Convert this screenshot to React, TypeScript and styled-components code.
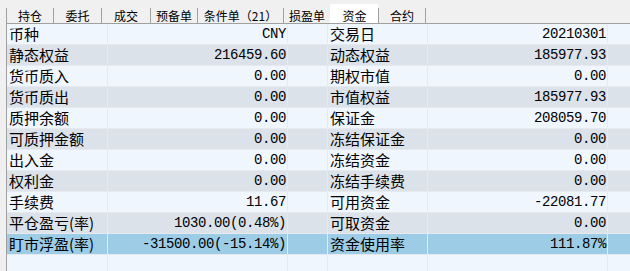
import styled, { createGlobalStyle } from "styled-components";
import { FC } from "react";

const GlobalStyle = createGlobalStyle`
    html, body {
        margin: 0;
        padding: 0;
        background: #f0f0f0;
    }
    body {
        width: 630px;
        height: 271px;
        overflow: hidden;
        font-family: "Noto Sans CJK SC", "Liberation Sans", sans-serif;
    }
`;

const tabs = [
    { name: "持仓", width: 47 },
    { name: "委托", width: 48 },
    { name: "成交", width: 49 },
    { name: "预备单", width: 47 },
    { name: "条件单（21）", width: 86 },
    { name: "损盈单", width: 47 },
    { name: "资金", width: 48 },
    { name: "合约", width: 48 },
];

const rows: [string, string, string, string][] = [
    ["币种", "CNY", "交易日", "20210301"],
    ["静态权益", "216459.60", "动态权益", "185977.93"],
    ["货币质入", "0.00", "期权市值", "0.00"],
    ["货币质出", "0.00", "市值权益", "185977.93"],
    ["质押余额", "0.00", "保证金", "208059.70"],
    ["可质押金额", "0.00", "冻结保证金", "0.00"],
    ["出入金", "0.00", "冻结资金", "0.00"],
    ["权利金", "0.00", "冻结手续费", "0.00"],
    ["手续费", "11.67", "可用资金", "-22081.77"],
    ["平仓盈亏(率)", "1030.00(0.48%)", "可取资金", "0.00"],
    ["盯市浮盈(率)", "-31500.00(-15.14%)", "资金使用率", "111.87%"],
];

type Tone = "light" | "dark" | "active";

const App: FC = () => {
    const activeTab = "资金";
    return (
        <>
            <GlobalStyle />
            <Wrapper>
                <TabBar>
                    {tabs.map((t, i) => (
                        <Tab
                            key={t.name}
                            $width={t.width}
                            $active={t.name === activeTab}
                            $last={i === tabs.length - 1}>
                            {t.name}
                        </Tab>
                    ))}
                </TabBar>
                <Table>
                    <Grid>
                        {rows.map((r, i) => {
                            const tone: Tone = i === rows.length - 1 ? "active" : i % 2 === 0 ? "light" : "dark";
                            return (
                                <Row key={r[0]}>
                                    <Label $tone={tone}>{r[0]}</Label>
                                    <Value $tone={tone}>{r[1]}</Value>
                                    <Cell $tone={tone} />
                                    <Label $tone={tone}>{r[2]}</Label>
                                    <Value $tone={tone}>{r[3]}</Value>
                                    <Cell $tone={tone} />
                                </Row>
                            );
                        })}
                        <Row>
                            {Array.from({ length: 6 }).map((_, i) => (
                                <Cell key={i} $tone="light" $tall />
                            ))}
                        </Row>
                    </Grid>
                </Table>
            </Wrapper>
        </>
    );
};

const toneColor = (tone: Tone) =>
    tone === "active" ? "#9dcce6" : tone === "dark" ? "#dce2ea" : "#f0f6fe";

const Wrapper = styled.div`
    width: 630px;
    height: 271px;
    display: flex;
    flex-direction: column;
`;

const TabBar = styled.div`
    display: flex;
    align-items: flex-end;
    height: 23px;
    padding-left: 6px;
    box-sizing: border-box;
`;

const Tab = styled.div<{ $width: number; $active: boolean; $last: boolean }>`
    box-sizing: border-box;
    width: ${(p) => p.$width}px;
    height: ${(p) => (p.$active ? 19 : 15)}px;
    padding-top: ${(p) => (p.$active ? 4 : 0)}px;
    background: ${(p) => (p.$active ? "#ffffff" : "transparent")};
    border-left: 1px solid ${(p) => (p.$active ? "#ffffff" : "#a0a0a0")};
    border-right: ${(p) => (p.$last ? "1px solid #a0a0a0" : "none")};
    font-size: 12px;
    line-height: 15px;
    text-align: center;
    color: #000000;
    white-space: nowrap;
    overflow: hidden;
`;

const Table = styled.div`
    flex: 1;
    margin-left: 6px;
    border-left: 1px solid #a0a0a0;
    border-top: 1px solid #a0a0a0;
    background: #e6eaef;
    overflow: hidden;
`;

const Grid = styled.div`
    display: grid;
    grid-template-columns: 100px 179px 39px 99px 179px 1fr;
    column-gap: 1px;
    row-gap: 1px;
`;

const Row = styled.div`
    display: contents;
`;

const Cell = styled.div<{ $tone: Tone; $tall?: boolean }>`
    height: ${(p) => (p.$tall ? 40 : 20)}px;
    background: ${(p) => toneColor(p.$tone)};
`;

const Label = styled(Cell)`
    padding-left: 2px;
    font-size: 15px;
    line-height: 20px;
    color: #000000;
    white-space: nowrap;
    overflow: hidden;
`;

const Value = styled(Cell)`
    padding-right: 1px;
    text-align: right;
    font-family: "Liberation Mono", "DejaVu Sans Mono", monospace;
    font-size: 14px;
    letter-spacing: -0.4px;
    line-height: 21px;
    color: #000000;
    white-space: nowrap;
`;

export default App;
